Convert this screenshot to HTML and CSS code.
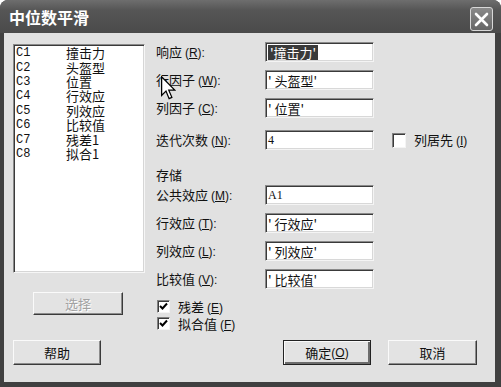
FILE: index.html
```html
<!DOCTYPE html>
<html>
<head>
    <title>中位数平滑</title>
    <link rel="stylesheet" href="styles.css">
</head>
<body>
    <div class="window">
        <div class="titlebar">
            <span class="title">中位数平滑</span>
            <span class="close-btn">
                <svg width="15" height="15" viewBox="0 0 15 15"><path d="M2 2 L13 13 M13 2 L2 13" stroke="#fff" stroke-width="2.6" stroke-linecap="round"/></svg>
            </span>
        </div>

        <div class="client">
            <div class="main">
                <div class="side">
                    <div class="listbox">
                        <div class="item"><span class="code">C1</span><span class="name">撞击力</span></div>
                        <div class="item"><span class="code">C2</span><span class="name">头盔型</span></div>
                        <div class="item"><span class="code">C3</span><span class="name">位置</span></div>
                        <div class="item"><span class="code">C4</span><span class="name">行效应</span></div>
                        <div class="item"><span class="code">C5</span><span class="name">列效应</span></div>
                        <div class="item"><span class="code">C6</span><span class="name">比较值</span></div>
                        <div class="item"><span class="code">C7</span><span class="name">残差1</span></div>
                        <div class="item"><span class="code">C8</span><span class="name">拟合1</span></div>
                    </div>
                    <div class="btn btn-disabled btn-select">选择</div>
                </div>

                <div class="form">
                    <div class="row">
                        <span class="label">响应 <span class="key">(<u>R</u>):</span></span>
                        <div class="field"><span class="selected">'撞击力'</span></div>
                    </div>
                    <div class="row">
                        <span class="label">行因子 <span class="key">(<u>W</u>):</span></span>
                        <div class="field">' 头盔型'</div>
                    </div>
                    <div class="row">
                        <span class="label">列因子 <span class="key">(<u>C</u>):</span></span>
                        <div class="field">' 位置'</div>
                    </div>
                    <div class="row row-iter">
                        <span class="label">迭代次数 <span class="key">(<u>N</u>):</span></span>
                        <div class="field field-num">4</div>
                        <label class="check check-col">
                            <span class="box"></span>
                            <span>列居先 <span class="key">(<u>I</u>)</span></span>
                        </label>
                    </div>

                    <div class="heading">存储</div>
                    <div class="row row-first">
                        <span class="label">公共效应 <span class="key">(<u>M</u>):</span></span>
                        <div class="field field-num">A1</div>
                    </div>
                    <div class="row">
                        <span class="label">行效应 <span class="key">(<u>T</u>):</span></span>
                        <div class="field">' 行效应'</div>
                    </div>
                    <div class="row">
                        <span class="label">列效应 <span class="key">(<u>L</u>):</span></span>
                        <div class="field">' 列效应'</div>
                    </div>
                    <div class="row">
                        <span class="label">比较值 <span class="key">(<u>V</u>):</span></span>
                        <div class="field">' 比较值'</div>
                    </div>

                    <div class="checks">
                        <label class="check">
                            <span class="box"><svg width="9" height="9" viewBox="0 0 9 9"><path d="M1 4 L3.5 6.5 L8 1.5" fill="none" stroke="#000" stroke-width="2"/></svg></span>
                            <span>残差 <span class="key">(<u>E</u>)</span></span>
                        </label>
                        <label class="check">
                            <span class="box"><svg width="9" height="9" viewBox="0 0 9 9"><path d="M1 4 L3.5 6.5 L8 1.5" fill="none" stroke="#000" stroke-width="2"/></svg></span>
                            <span>拟合值 <span class="key">(<u>F</u>)</span></span>
                        </label>
                    </div>
                </div>
            </div>

            <div class="footer">
                <div class="btn btn-help">帮助</div>
                <div class="btn btn-default">确定 <span class="key">(<u>O</u>)</span></div>
                <div class="btn btn-cancel">取消</div>
            </div>
        </div>

        <!-- mouse pointer -->
        <svg class="cursor" width="15" height="24" viewBox="0 0 12 19">
            <path d="M0.5 0.5 L0.5 15.5 L4 12 L6.5 18 L8.7 17 L6.2 11.2 L11 11.2 Z" fill="#fff" stroke="#000" stroke-width="1"/>
        </svg>
    </div>
</body>
</html>
```

FILE: styles.css
```css
body {
    margin: 0;
    padding: 0;
    background: #fff;
    font-family: "Noto Sans CJK SC", "Liberation Sans", sans-serif;
    font-size: 13px;
    color: #111;
}

.window {
    position: relative;
    width: 501px;
    height: 387px;
    box-sizing: border-box;
    padding: 0 6px 5px 4px;
    background: #404040;
    border-radius: 8px 8px 0 0;
    display: flex;
    flex-direction: column;
}

.titlebar {
    height: 33px;
    margin: 0 -6px 0 -4px;
    padding: 0 8px 0 9px;
    display: flex;
    align-items: center;
    justify-content: space-between;
    background: linear-gradient(#6e6e6e, #565656 30%, #4a4a4a);
    border-radius: 8px 8px 0 0;
}

.title {
    color: #fff;
    font-size: 16px;
    font-weight: bold;
    line-height: 1;
}

.close-btn {
    width: 21px;
    height: 22px;
    margin-top: 5px;
    border: 1px solid #d8d8d8;
    border-radius: 3px;
    background: linear-gradient(#8a8a8a, #666);
    display: flex;
    align-items: center;
    justify-content: center;
}

.client {
    flex: 1;
    background: #e1e1e1;
    padding: 9px 18px 0 9px;
    display: flex;
    flex-direction: column;
}

.main {
    display: flex;
}

.side {
    width: 132px;
    padding-top: 2px;
}

.listbox {
    height: 229px;
    box-sizing: border-box;
    background: #fff;
    border: 1px solid;
    border-color: #8a8a8a #f6f6f6 #f6f6f6 #8a8a8a;
    box-shadow: inset 1px 1px 0 #3a3a3a, inset -1px -1px 0 #d6d6d6;
    padding: 1px 2px;
}

.item {
    height: 14.4px;
    display: flex;
    align-items: center;
    line-height: 14px;
}

.item .code {
    width: 50px;
    font-family: "Liberation Mono", monospace;
    font-size: 12px;
}

.item .name {
    font-size: 13px;
}

.key {
    font-family: "Liberation Sans", sans-serif;
    font-size: 12px;
}

.btn {
    box-sizing: border-box;
    height: 25px;
    background: #e3e3e3;
    border: 1px solid;
    border-color: #fafafa #3a3a3a #3a3a3a #fafafa;
    box-shadow: inset -1px -1px 0 #8c8c8c;
    display: flex;
    align-items: center;
    justify-content: center;
    line-height: 1;
}

.btn-select {
    width: 90px;
    height: 23px;
    margin: 19px 0 0 20px;
}

.btn-disabled {
    color: #a2a2a2;
    text-shadow: 1px 1px 0 #fff;
}

.form {
    margin-left: 11px;
    display: flex;
    flex-direction: column;
}

.row {
    height: 20px;
    margin-top: 8px;
    display: flex;
    align-items: center;
}

.row:first-child {
    margin-top: 0;
}

.row-iter {
    margin-top: 12px;
}

.row-first {
    margin-top: 2px;
}

.label {
    width: 109px;
    white-space: nowrap;
    line-height: 1;
}

.field {
    box-sizing: border-box;
    width: 109px;
    height: 20px;
    background: #fff;
    border: 1px solid;
    border-color: #8a8a8a #f4f4f4 #f4f4f4 #8a8a8a;
    box-shadow: inset 1px 1px 0 #3a3a3a, inset -1px -1px 0 #d8d8d8;
    padding: 0 2px;
    display: flex;
    align-items: center;
    white-space: nowrap;
    line-height: 1;
}

.field-num {
    font-family: "Liberation Serif", serif;
    font-size: 12px;
}

.selected {
    background: #3a3a3a;
    color: #fff;
    padding: 1px 2px;
}

.heading {
    height: 16px;
    margin-top: 17px;
    line-height: 16px;
}

.check {
    display: flex;
    align-items: center;
    gap: 8px;
    line-height: 1;
    white-space: nowrap;
}

.box {
    box-sizing: border-box;
    width: 13px;
    height: 13px;
    background: #fff;
    border: 1px solid;
    border-color: #808080 #f4f4f4 #f4f4f4 #808080;
    box-shadow: inset 1px 1px 0 #3a3a3a;
    display: flex;
    align-items: center;
    justify-content: center;
}

.check-col {
    margin-left: 18px;
}

.check-col .box {
    width: 14px;
    height: 15px;
}

.checks {
    margin-top: 9px;
}

.checks .check {
    height: 17px;
    gap: 8px;
}

.checks .check .box {
    margin-left: 1px;
}

.footer {
    margin-top: 8px;
    display: flex;
}

.btn-help {
    width: 88px;
}

.btn-default {
    width: 88px;
    margin-left: auto;
    border-color: #222;
    box-shadow: inset 1px 1px 0 #fafafa, inset -2px -2px 0 #6c6c6c;
}

.btn-cancel {
    width: 89px;
    margin-left: 17px;
}

.cursor {
    position: absolute;
    left: 161px;
    top: 76px;
}
```
